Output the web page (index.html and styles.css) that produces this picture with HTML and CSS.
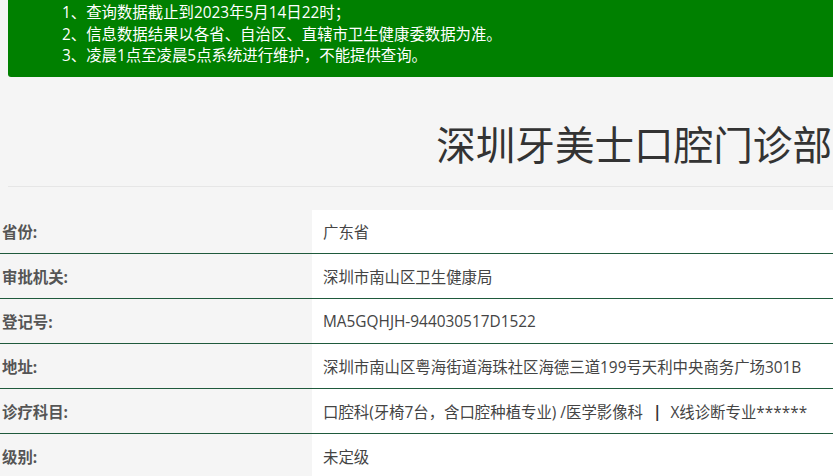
FILE: index.html
```html
<!DOCTYPE html>
<html lang="zh-CN">
<head>
<meta charset="utf-8">
<title>深圳牙美士口腔门诊部</title>
<link rel="stylesheet" href="styles.css">
</head>
<body>
<div class="notice">
  <p>1、查询数据截止到2023年5月14日22时；</p>
  <p>2、信息数据结果以各省、自治区、直辖市卫生健康委数据为准。</p>
  <p>3、凌晨1点至凌晨5点系统进行维护，不能提供查询。</p>
</div>
<h1 class="title">深圳牙美士口腔门诊部</h1>
<div class="rule"></div>
<div class="info">
  <div class="row"><div class="label">省份:</div><div class="value">广东省</div></div>
  <div class="row"><div class="label">审批机关:</div><div class="value">深圳市南山区卫生健康局</div></div>
  <div class="row"><div class="label">登记号:</div><div class="value">MA5GQHJH-944030517D1522</div></div>
  <div class="row"><div class="label">地址:</div><div class="value">深圳市南山区粤海街道海珠社区海德三道199号天利中央商务广场301B</div></div>
  <div class="row"><div class="label">诊疗科目:</div><div class="value">口腔科(牙椅7台，含口腔种植专业) /医学影像科<span class="sep">|</span>X线诊断专业******</div></div>
  <div class="row"><div class="label">级别:</div><div class="value">未定级</div></div>
</div>
</body>
</html>
```
FILE: styles.css
```css
* { box-sizing: border-box; }
html, body { margin: 0; padding: 0; }
body {
  background: #f5f5f5;
  font-family: "Open Sans", "Noto Sans CJK SC", sans-serif;
  color: #333;
  overflow: hidden;
}
.notice {
  margin-left: 8px;
  background: #008000;
  color: #fff;
  padding: 2px 0 10px 54px;
  height: 77px;
  border-bottom-left-radius: 3px;
  font-size: 15.4px;
  line-height: 21.5px;
}
.notice p { margin: 0; white-space: nowrap; }
.title {
  margin: 46px 0 0 0;
  font-size: 39.6px;
  font-weight: 400;
  line-height: 44px;
  color: #333;
  text-align: right;
  padding-right: 1px;
  white-space: nowrap;
}
.rule {
  margin: 19px 0 0 8px;
  height: 1px;
  background: #e6e6e6;
}
.info {
  margin-top: 23px;
}
.row {
  display: flex;
  height: 45px;
  border-bottom: 1px solid #1f5a3c;
  font-size: 15.4px;
}
.row:first-child { height: 44px; }
.label {
  width: 312px;
  flex: none;
  padding-left: 2px;
  display: flex;
  align-items: center;
  font-weight: 700;
  color: #555;
}
.value {
  flex: 1;
  background: #fff;
  padding-left: 11px;
  display: flex;
  align-items: center;
  color: #444;
  white-space: nowrap;
}
.sep {
  margin: 0 9px 0 10px;
  font-weight: 700;
  color: #333;
}
```
